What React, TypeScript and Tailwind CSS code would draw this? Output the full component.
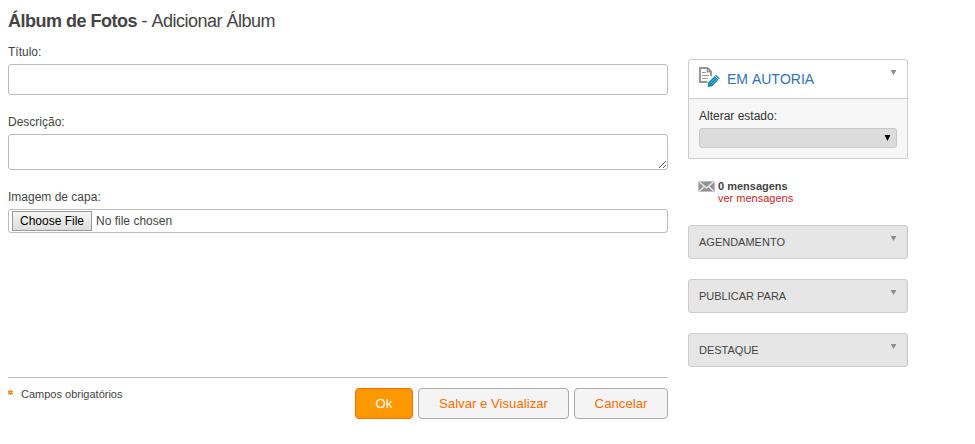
import type { ReactNode } from "react";

const fieldClass = "block w-full rounded-[3px] border border-[#bbb] bg-white outline-none";

function Caret({ className }: { className?: string }) {
  return (
    <svg viewBox="0 0 7 5" preserveAspectRatio="none" className={className} fill="currentColor">
      <path d="M.6 0h5.8L3.5 5z" />
    </svg>
  );
}

function DocumentEditIcon() {
  return (
    <svg width="21" height="21" viewBox="0 0 21 21" fill="none">
      <path d="M8.5 15H1V1h7.5L12 4.5V9" stroke="#949494" strokeWidth="1.9" />
      <path d="M8.3 1v3.8H12" stroke="#949494" strokeWidth="1.4" />
      <path d="M3 5.5h4M3 8.5h7M3 11.5h6" stroke="#999" />
      <path d="M8.5 20l.8-4.5L17 7.8l3.7 3.7L13 19.2z" fill="#0783ad" />
      <path d="M11 16.5l6-6M12.7 17.7l5.5-5.5" stroke="#8fd2e6" strokeWidth=".8" />
      <path d="M15.8 8.8l4 4" stroke="#fff" strokeWidth=".8" />
    </svg>
  );
}

function MailIcon() {
  return (
    <svg width="17" height="11" viewBox="0 0 17 11" fill="none">
      <rect x=".5" y=".5" width="16" height="10" rx="1" fill="#939393" stroke="#bdbdbd" />
      <path d="M1.5 1l7 6 7-6M1.5 10l5-4.7M15.5 10l-5-4.7" stroke="#f2f2f2" strokeWidth="1.2" />
    </svg>
  );
}

function Field({ label, id, children }: { label: string; id: string; children: ReactNode }) {
  return (
    <div>
      <label htmlFor={id} className="mb-1 block leading-4">
        {label}
      </label>
      {children}
    </div>
  );
}

function StatePanel() {
  return (
    <section className="h-[100px] rounded-t-[3px] rounded-b-[1px] border border-[#ccc] bg-[#f6f6f6]">
      <header className="flex h-[39px] items-start rounded-t-[3px] border-b border-[#ccc] bg-white pl-2.5">
        <div className="mt-[7px] w-7">
          <DocumentEditIcon />
        </div>
        <h2 className="mt-[9px] text-sm leading-5 text-[#3173ae] [font-kerning:none]">EM AUTORIA</h2>
        <Caret className="mt-2.5 mr-2.5 ml-auto h-[5px] w-[7px] text-[#8c8c8c]" />
      </header>
      <div className="px-2.5 pt-[9px] text-[#333]">
        <label htmlFor="estado" className="mb-1 block leading-4">
          Alterar estado:
        </label>
        <div className="relative">
          <select
            id="estado"
            className="block h-5 w-full appearance-none rounded-[3px] border border-[#c8c8c8] bg-[#dcdcdc]"
          />
          <Caret className="pointer-events-none absolute top-[7px] right-1.5 h-1.5 w-[7px] text-black" />
        </div>
      </div>
    </section>
  );
}

function CollapsedPanel({ title }: { title: string }) {
  return (
    <section className="flex h-[34px] justify-between rounded-[3px] border border-[#ccc] bg-[#e6e6e6] px-2.5 text-[11px]">
      <h2 className="leading-8">{title}</h2>
      <Caret className="mt-2.5 h-[5px] w-[7px] text-[#8c8c8c]" />
    </section>
  );
}

export default function App() {
  return (
    <div className="flex min-h-[444px] gap-5 bg-white pl-2 font-['Liberation_Sans',Arial,sans-serif] text-xs text-[#444]">
      <main className="w-[660px] pt-2.5">
        <h1 className="text-lg leading-[22px] tracking-[-0.5px] [font-kerning:none]">
          <strong>Álbum de Fotos</strong> - Adicionar Álbum
        </h1>

        <form className="mt-3" onSubmit={(e) => e.preventDefault()}>
          <div className="flex h-[334px] flex-col border-b border-[#bbb]">
            <Field label="Título:" id="titulo">
              <input id="titulo" type="text" className={`${fieldClass} h-[31px]`} />
            </Field>
            <div className="mt-[19px]">
              <Field label="Descrição:" id="descricao">
                <textarea id="descricao" className={`${fieldClass} h-9 resize`} />
              </Field>
            </div>
            <div className="mt-[19px]">
              <Field label="Imagem de capa:" id="capa">
                <input
                  id="capa"
                  type="file"
                  className={`${fieldClass} h-6 px-[3px] py-px leading-[18px] file:mr-1 file:h-5 file:border file:border-solid file:border-[#999] file:bg-linear-to-b file:from-[#f6f6f6] file:to-[#dddddd] file:px-[7px] file:leading-[18px] file:text-black`}
                />
              </Field>
            </div>
          </div>

          <footer className="flex justify-between pt-2.5">
            <p className="flex h-[13px] gap-2 text-[11px] leading-[13px]">
              <svg width="5" height="5" viewBox="0 0 5 5" className="mt-0.5" fill="none">
                <path d="M2.5 0v5M.3 1.2l4.4 2.6M.3 3.8l4.4-2.6" stroke="#ef7c20" strokeWidth="1.5" />
                <circle cx="2.5" cy="2.5" r="1" fill="#ffd21f" />
              </svg>
              Campos obrigatórios
            </p>
            <div className="flex gap-[5px] text-[13.2px]">
              <button className="h-[31px] w-[58px] rounded border border-[#ff6c00] bg-[#fc9802] text-white">
                Ok
              </button>
              <button className="h-[31px] w-[151px] rounded border border-[#aaa] bg-[#f4f4f4] text-[#ff6c00]">
                Salvar e Visualizar
              </button>
              <button className="h-[31px] w-[94px] rounded border border-[#aaa] bg-[#f4f4f4] text-[#ff6c00]">
                Cancelar
              </button>
            </div>
          </footer>
        </form>
      </main>

      <aside className="w-[220px] pt-[59px]">
        <StatePanel />
        <div className="mt-[21px] mb-5 flex h-[25px] gap-[3px] pl-2.5 text-[11px] leading-3">
          <div className="mt-px">
            <MailIcon />
          </div>
          <div>
            <strong className="block">0 mensagens</strong>
            <a href="#mensagens" className="block text-[#c41f1f]">
              ver mensagens
            </a>
          </div>
        </div>
        <div className="flex flex-col gap-5">
          <CollapsedPanel title="AGENDAMENTO" />
          <CollapsedPanel title="PUBLICAR PARA" />
          <CollapsedPanel title="DESTAQUE" />
        </div>
      </aside>
    </div>
  );
}
